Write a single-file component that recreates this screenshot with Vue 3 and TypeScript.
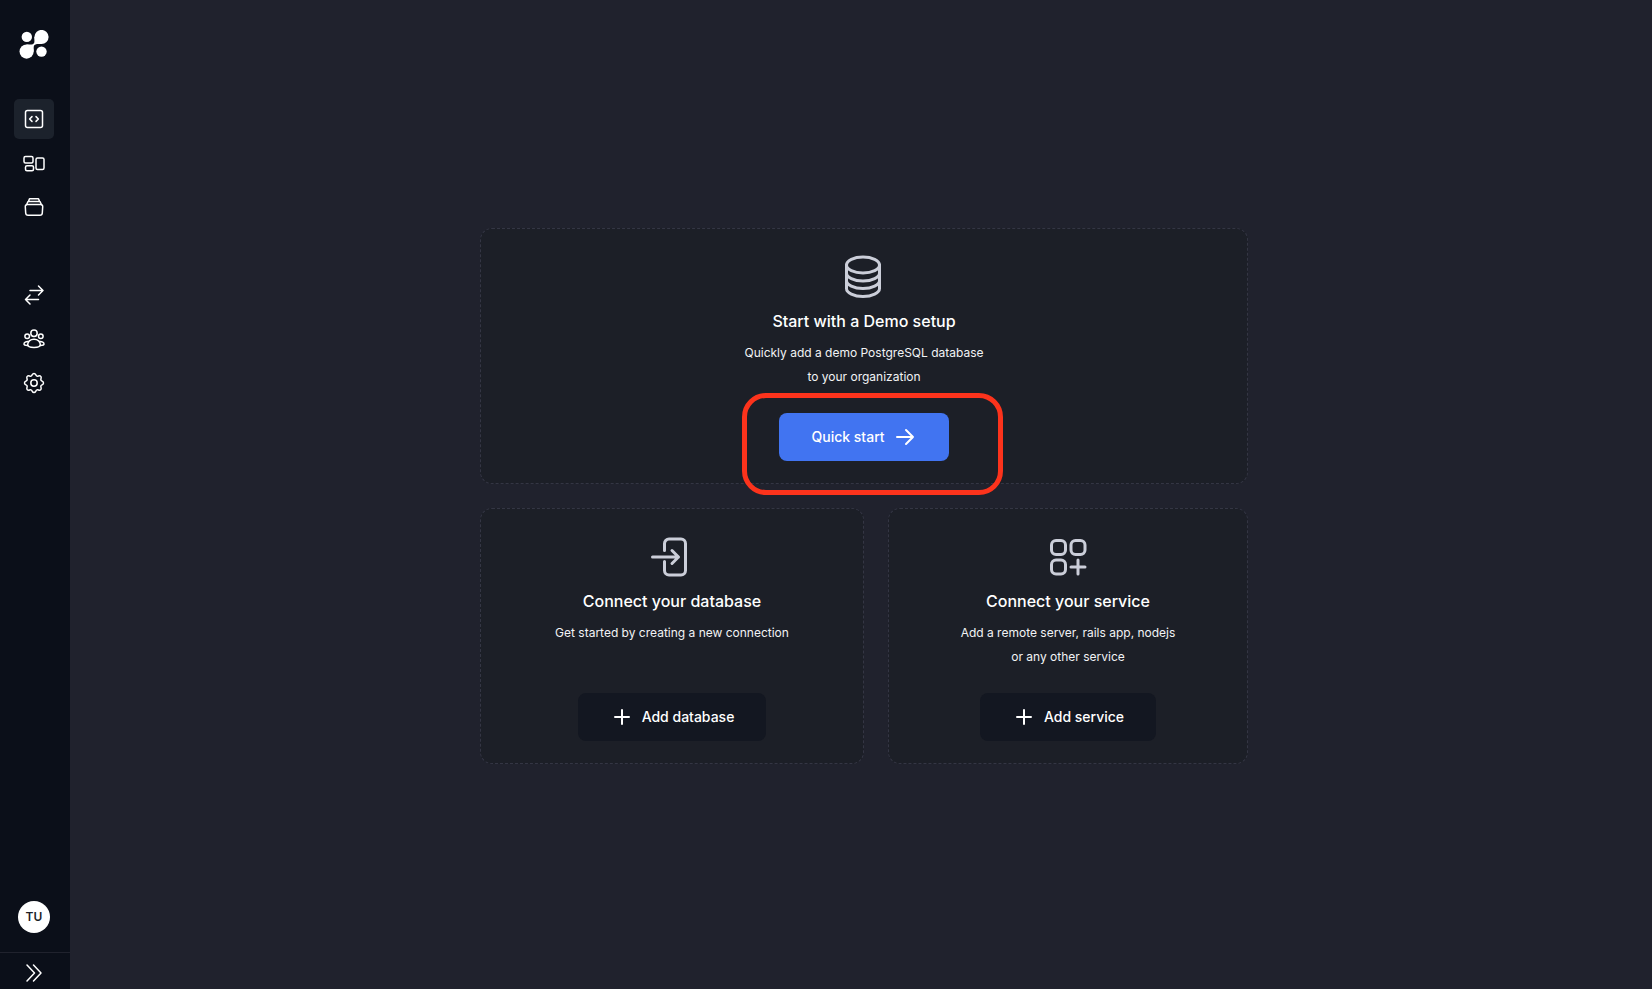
<script setup lang="ts">
interface NavItem {
  label: string
  icon: string
  active?: boolean
}

const navGroups: NavItem[][] = [
  [
    { label: 'Editor', icon: 'code', active: true },
    { label: 'Dashboards', icon: 'boards' },
    { label: 'Collections', icon: 'stack' },
  ],
  [
    { label: 'Connections', icon: 'swap' },
    { label: 'Members', icon: 'users' },
    { label: 'Settings', icon: 'gear' },
  ],
]

interface SetupCard {
  title: string
  lines: string[]
  action: string
  icon: string
  primary?: boolean
}

const cards: SetupCard[] = [
  {
    title: 'Start with a Demo setup',
    lines: ['Quickly add a demo PostgreSQL database', 'to your organization'],
    action: 'Quick start',
    icon: 'database',
    primary: true,
  },
  {
    title: 'Connect your database',
    lines: ['Get started by creating a new connection'],
    action: 'Add database',
    icon: 'login',
  },
  {
    title: 'Connect your service',
    lines: ['Add a remote server, rails app, nodejs', 'or any other service'],
    action: 'Add service',
    icon: 'apps',
  },
]
</script>

<template>
  <div class="app">
    <aside class="sidebar">
      <a class="logo" href="#" aria-label="Home">
        <svg viewBox="0 0 30 30" fill="currentColor">
          <circle cx="7.8" cy="6.900" r="5.200" />
          <circle cx="22.500" cy="21.600" r="5.200" />
          <circle cx="22.500" cy="7" r="7.100" />
          <circle cx="7.600" cy="21.600" r="7.100" />
          <path d="M15.400 7V11.500Q15.400 14.200 12.500 14.500H7.600V21.600H14.700V17.500Q14.700 14.600 18 14.100H22.500V7Z" />
        </svg>
      </a>
      <nav class="nav">
        <div v-for="(group, g) in navGroups" :key="g" class="nav-group">
          <button
            v-for="item in group"
            :key="item.label"
            type="button"
            class="nav-button"
            :class="{ active: item.active }"
            :aria-label="item.label"
          >
            <svg class="icon" viewBox="0 0 24 24">
              <template v-if="item.icon === 'code'">
                <rect x="3.500" y="3.500" width="17" height="17" rx="2" />
                <path d="M10 9.600 7.600 12 10 14.400M14 9.600l2.400 2.400-2.400 2.400" />
              </template>
              <template v-else-if="item.icon === 'boards'">
                <rect x="2" y="5.500" width="9" height="6.500" rx="1.500" />
                <rect x="3.500" y="14.800" width="8" height="5" rx="1.500" />
                <rect x="14" y="7" width="8" height="11.500" rx="1.500" />
              </template>
              <template v-else-if="item.icon === 'stack'">
                <path d="M5.500 9.500h13a2 2 0 0 1 2.200 2.200l-.4 6.300a2.400 2.400 0 0 1-2.400 2.300H6.100A2.400 2.400 0 0 1 3.700 18l-.4-6.300A2 2 0 0 1 5.500 9.500Z" />
                <path d="M4.500 9.700 6 6.500h12l1.500 3.200M6.500 6.300 7.500 3.700h9l1 2.600" />
              </template>
              <template v-else-if="item.icon === 'swap'">
                <path d="M8 7.500h13M16.500 3 21 7.500 16.500 12M16.500 16.500h-13M8 12l-4.500 4.500L8 21" />
              </template>
              <template v-else-if="item.icon === 'users'">
                <circle cx="12" cy="6.200" r="3.200" />
                <circle cx="5.200" cy="9.200" r="2.300" />
                <circle cx="18.800" cy="9.200" r="2.300" />
                <path d="M12 12.300c4 0 6.300 2.600 6.300 5.200 0 2-2.500 3-6.300 3s-6.300-1-6.300-3c0-2.600 2.300-5.200 6.300-5.200Z" />
                <path d="M6.200 14.600c-2.200-.2-4.200.8-4.200 2.300 0 1.100 1.300 1.500 3.700 1.500M17.800 14.600c2.200-.2 4.200.8 4.200 2.300 0 1.100-1.300 1.500-3.700 1.500" />
              </template>
              <template v-else>
                <circle cx="12" cy="12" r="3.200" />
                <path d="M12 2.500c1.900 0 1.700 2.200 2.900 2.600 1.200.5 2.500-1.200 3.800.2 1.400 1.300-.3 2.600.2 3.800.4 1.200 2.600 1 2.600 2.900s-2.200 1.700-2.600 2.900c-.5 1.200 1.200 2.500-.2 3.800-1.300 1.400-2.600-.3-3.800.2-1.200.4-1 2.600-2.900 2.600s-1.700-2.200-2.900-2.600c-1.200-.5-2.500 1.200-3.800-.2-1.400-1.300.3-2.600-.2-3.800-.4-1.200-2.600-1-2.600-2.900s2.200-1.700 2.600-2.900c.5-1.200-1.200-2.500.2-3.800 1.300-1.400 2.600.3 3.800-.2 1.200-.4 1-2.600 2.900-2.600Z" />
              </template>
            </svg>
          </button>
        </div>
      </nav>
      <button type="button" class="avatar" aria-label="Account">TU</button>
      <button type="button" class="expand" aria-label="Expand sidebar">
        <svg class="icon" viewBox="0 0 24 24">
          <path d="m5 4 7.500 8L5 20M11.500 4l7.500 8-7.500 8" />
        </svg>
      </button>
    </aside>

    <main class="main">
      <div class="cards">
        <section v-for="card in cards" :key="card.title" class="card" :class="{ wide: card.primary }">
          <svg class="card-icon" viewBox="0 0 48 48">
            <template v-if="card.icon === 'database'">
              <ellipse cx="23" cy="12" rx="16.500" ry="8" />
              <path d="M6.500 12V35.500c0 4.400 7.400 8 16.500 8s16.500-3.600 16.500-8V12" />
              <path d="M6.500 20c0 4.400 7.400 8 16.500 8s16.500-3.600 16.500-8M6.500 27.500c0 4.400 7.400 8 16.500 8s16.500-3.600 16.500-8" />
            </template>
            <template v-else-if="card.icon === 'login'">
              <path d="M16.500 17.500V10.500a4.500 4.500 0 0 1 4.500-4.500h12a4.500 4.500 0 0 1 4.500 4.500v27a4.500 4.500 0 0 1-4.500 4.500h-12a4.500 4.500 0 0 1-4.500-4.500v-9" />
              <path d="M4.500 24h26M24 17.500l6.500 6.500-6.500 6.500" />
            </template>
            <template v-else>
              <rect x="7.500" y="7.500" width="14" height="14" rx="4.500" />
              <rect x="27" y="7.500" width="14" height="14" rx="4.500" />
              <rect x="7.500" y="27" width="14" height="14" rx="4.500" />
              <path d="M34 27v14M27 34h14" />
            </template>
          </svg>
          <h2 class="title">{{ card.title }}</h2>
          <p class="text">
            <span v-for="line in card.lines" :key="line">{{ line }}</span>
          </p>
          <div class="action">
            <button type="button" class="button" :class="{ primary: card.primary }">
              <svg v-if="!card.primary" class="icon button-icon" viewBox="0 0 24 24">
                <path d="M12 5v14M5 12h14" />
              </svg>
              {{ card.action }}
              <svg v-if="card.primary" class="icon button-icon" viewBox="0 0 24 24">
                <path d="M4 12h16M13 5l7 7-7 7" />
              </svg>
            </button>
            <span v-if="card.primary" class="highlight"></span>
          </div>
        </section>
      </div>
    </main>
  </div>
</template>

<style>
body {
  background: #20222d;
}
</style>

<style scoped>
.app {
  display: flex;
  min-height: 100vh;
  background: #20222d;
  color: #fff;
  font-family: Inter, "Liberation Sans", sans-serif;
}

button {
  border: 0;
  padding: 0;
  color: inherit;
  font-family: inherit;
  cursor: pointer;
}

svg {
  display: block;
}

.icon {
  width: 24px;
  height: 24px;
  fill: none;
  stroke: currentColor;
  stroke-width: 1.5;
  stroke-linecap: round;
  stroke-linejoin: round;
}

.sidebar {
  display: flex;
  flex: none;
  flex-direction: column;
  align-items: center;
  box-sizing: border-box;
  width: 70px;
  height: 100vh;
  padding: 30px 2px 0 0;
  background: #0b0f19;
}

.logo {
  width: 30px;
  height: 30px;
  color: #fff;
}

.logo svg {
  width: 30px;
  height: 30px;
}

.nav {
  display: flex;
  flex: 1;
  flex-direction: column;
  gap: 48px;
  padding-top: 39px;
}

.nav-group {
  display: flex;
  flex-direction: column;
  gap: 4px;
}

.nav-button {
  display: grid;
  place-items: center;
  width: 40px;
  height: 40px;
  border-radius: 5px;
  background: transparent;
}

.nav-button.active {
  background: #1c222c;
}

.avatar {
  flex: none;
  width: 32px;
  height: 32px;
  margin-bottom: 19px;
  border-radius: 50%;
  background: #fff;
  color: #1d1f28;
  font-size: 12px;
  font-weight: 600;
  line-height: 32px;
}

.expand {
  display: grid;
  flex: none;
  place-items: center;
  align-self: stretch;
  box-sizing: border-box;
  height: 37px;
  margin-right: -2px;
  padding: 4px 2px 0 0;
  border-top: 1px solid #20222d;
  background: transparent;
}

.main {
  display: grid;
  flex: 1;
  place-items: center;
  padding: 3px 0 0 6px;
}

.cards {
  display: grid;
  grid-template-columns: 384px 360px;
  gap: 24px;
}

.card {
  display: flex;
  flex-direction: column;
  align-items: center;
  box-sizing: border-box;
  min-height: 256px;
  padding: 24px 24px 22px;
  border: 1px dashed #343644;
  border-radius: 12px;
  background: #1c1f27;
}

.wide {
  grid-column: 1 / -1;
}

.card-icon {
  width: 48px;
  height: 48px;
  fill: none;
  stroke: #cbced9;
  stroke-width: 3;
  stroke-linecap: round;
  stroke-linejoin: round;
}

.title {
  margin: 0;
  font-size: 16px;
  font-weight: 500;
  line-height: 40px;
}

.text {
  flex: 1;
  margin: 0 0 24px;
  color: #f2f3f5;
  font-size: 12px;
  line-height: 24px;
  text-align: center;
}

.text span {
  display: block;
}

.action {
  position: relative;
}

.button {
  display: flex;
  align-items: center;
  gap: 8px;
  height: 48px;
  padding: 0 32px;
  border-radius: 8px;
  background: #131721;
  font-size: 14px;
  font-weight: 500;
  line-height: 24px;
}

.button.primary {
  background: #4174f1;
}

.button-icon {
  stroke-width: 2;
}

.highlight {
  position: absolute;
  inset: -20px -54px -34px -37px;
  border: 5px solid #fc331c;
  border-radius: 24px;
  pointer-events: none;
}
</style>
